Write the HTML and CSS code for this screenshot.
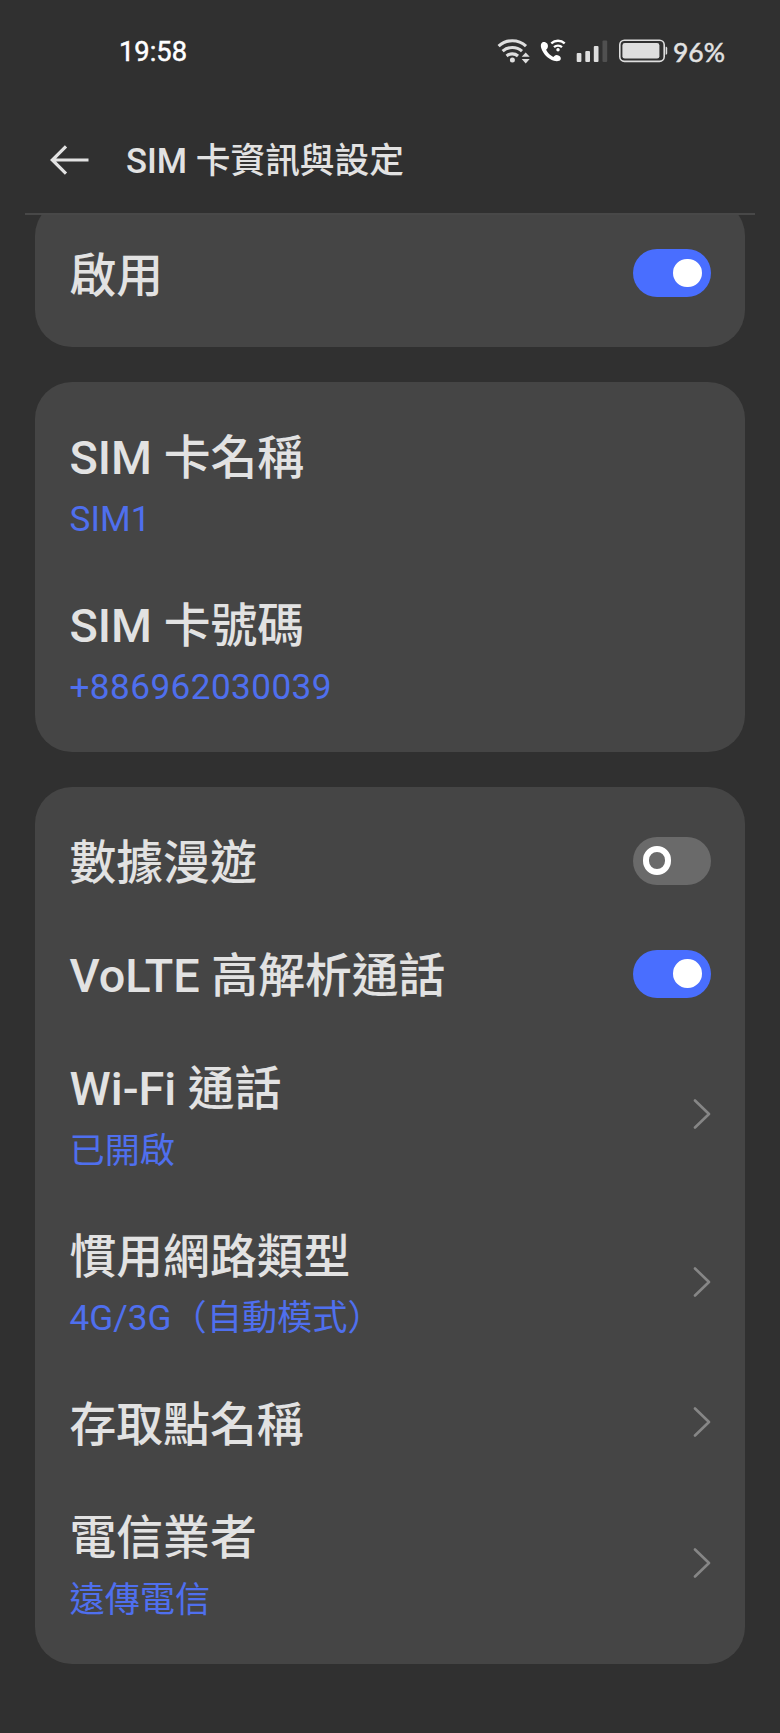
FILE: index.html
```html
<!DOCTYPE html>
<html lang="zh-Hant">
<head>
<meta charset="utf-8">
<title>SIM 卡資訊與設定</title>
<link rel="stylesheet" href="styles.css">
</head>
<body>
<div class="screen">
  <div class="status">
    <span class="time">19:58</span>
    <div class="status-right">
      <svg class="icons" width="192" height="30" viewBox="495 35 192 30" fill="none">
        <g stroke="#dedede" stroke-width="3.1">
          <path d="M498.600 46.200a20 20 0 0 1 27.400 0"/>
          <path d="M502.600 51.200a14.600 14.600 0 0 1 19.400 0"/>
          <path d="M506.600 56a8.800 8.800 0 0 1 11.400 0"/>
        </g>
        <circle cx="512.400" cy="60" r="2.500" fill="#dedede"/>
        <path d="M525.700 52.400l4 4.400h-8zM525.700 63.400l-4-4.400h8z" fill="#dedede"/>
        <path d="M542.500 42.300c-1.600.8-2.100 3.200-1.300 5.800 2 6.200 6.700 11 12.700 12.700 2.600.7 5.600.6 6.600-1 .8-1.400.1-3.200-1.500-4-1.600-.9-3.400-1-4.300-.1l-1.400 1.300c-3.200-1.600-5.600-4-7.200-7.200l1.200-1.300c.9-1.300.9-3.200-.1-4.900-1.100-1.500-3.200-2.100-4.700-1.300z" fill="#fff"/>
        <g stroke="#fff" stroke-width="2.400">
          <path d="M551.300 43.400a10 10 0 0 1 13.400 0"/>
          <path d="M554 47.200a6.200 6.200 0 0 1 8 0"/>
        </g>
        <circle cx="558" cy="49.800" r="1.700" fill="#fff"/>
        <rect x="576.700" y="53" width="4.700" height="9" rx="1" fill="#dedede"/>
        <rect x="585.300" y="51" width="4.700" height="11" rx="1" fill="#dedede"/>
        <rect x="593.800" y="46" width="4.700" height="16" rx="1" fill="#dedede"/>
        <rect x="602.500" y="40.500" width="4.700" height="21.500" rx="1" fill="#505050"/>
        <rect x="619.800" y="40.200" width="44.400" height="21.200" rx="4.600" stroke="#dedede" stroke-width="1.600"/>
        <rect x="622.400" y="43" width="37" height="15.600" rx="2.400" fill="#dedede"/>
        <path d="M665.600 46.700c1.300 0 1.600.5 1.600 1.600v4.800c0 1.100-.3 1.600-1.600 1.600z" fill="#dedede"/>
      </svg>
      <span class="percent">96%</span>
    </div>
  </div>

  <header class="header">
    <svg class="back" width="40" height="30" viewBox="0 0 40 30" fill="none" stroke="#e2e2e2" stroke-width="3.200"><path d="M39.500 15H3.500M17 1.400L3.300 15 17 28.600"/></svg>
    <h1 class="heading">SIM 卡資訊與設定</h1>
  </header>

  <main class="content">
    <section class="card card-first">
      <div class="row"><div class="text"><div class="title">啟用</div></div><span class="toggle on"><i class="knob"></i></span></div>
    </section>

    <section class="card">
      <div class="row tall"><div class="text"><div class="title">SIM 卡名稱</div><div class="sub">SIM1</div></div></div>
      <div class="row tall"><div class="text"><div class="title">SIM 卡號碼</div><div class="sub phone">+886962030039</div></div></div>
    </section>

    <section class="card">
      <div class="row"><div class="text"><div class="title">數據漫遊</div></div><span class="toggle"><i class="knob"></i></span></div>
      <div class="row"><div class="text"><div class="title">VoLTE 高解析通話</div></div><span class="toggle on"><i class="knob"></i></span></div>
      <div class="row tall"><div class="text"><div class="title">Wi-Fi 通話</div><div class="sub cjk">已開啟</div></div><svg class="chevron" viewBox="0 0 18 30"><path d="M2 1.500L16 15 2 28.500"/></svg></div>
      <div class="row tall"><div class="text"><div class="title">慣用網路類型</div><div class="sub">4G/3G（自動模式）</div></div><svg class="chevron" viewBox="0 0 18 30"><path d="M2 1.500L16 15 2 28.500"/></svg></div>
      <div class="row"><div class="text"><div class="title">存取點名稱</div></div><svg class="chevron" viewBox="0 0 18 30"><path d="M2 1.500L16 15 2 28.500"/></svg></div>
      <div class="row tall"><div class="text"><div class="title">電信業者</div><div class="sub cjk">遠傳電信</div></div><svg class="chevron" viewBox="0 0 18 30"><path d="M2 1.500L16 15 2 28.500"/></svg></div>
    </section>
  </main>
</div>
</body>
</html>
```
FILE: styles.css
```css
* { box-sizing: border-box; }
body {
  margin: 0;
  background: #303030;
  color: #e2e2e2;
  font-family: Roboto, "Noto Sans CJK TC", sans-serif;
}
.screen { width: 780px; height: 1733px; overflow: hidden; display: flex; flex-direction: column; }

.status {
  height: 104px;
  padding: 0 55px 0 119px;
  display: flex;
  justify-content: space-between;
  align-items: center;
}
.time { font-size: 27.300px; font-weight: 400; line-height: 30px; color: #fff; -webkit-text-stroke: 0.5px #fff; }
.status-right { display: flex; align-items: center; }
.icons { display: block; margin-top: -4px; }
.percent { width: 52px; margin-left: -14px; font: 26.500px/30px Lato, sans-serif; white-space: nowrap; -webkit-text-stroke: 0.5px #e2e2e2; }

.header {
  height: 111px;
  margin: 0 25px;
  padding: 0 25px 0 24px;
  border-bottom: 2px solid #484848;
  display: flex;
  align-items: center;
  gap: 37px;
}
.back { margin-top: 2px; flex: none; }
.heading { margin: 0; padding-top: 4px; font-size: 34.700px; font-weight: 500; line-height: 44px; white-space: nowrap; }

.content { height: 1518px; overflow: hidden; padding: 0 35px; }
.card {
  background: #454545;
  border-radius: 37px;
  padding: 17.500px 34px 17px 34.500px;
  margin-bottom: 34.800px;
}
.card-first { margin-top: -16px; padding-bottom: 17.500px; }
.row { height: 113px; display: flex; align-items: center; justify-content: space-between; }
.tall { height: 167.800px; }
.text { align-self: flex-start; padding-top: 32.200px; }
.title { font-size: 46.800px; line-height: 55px; font-weight: 500; white-space: nowrap; }
.sub { margin-top: 13px; font-size: 35.200px; line-height: 41px; color: #4f6fee; white-space: nowrap; }
.cjk { margin-top: 14px; }
.phone { letter-spacing: 0.4px; }

.toggle {
  width: 78px;
  height: 48px;
  padding: 0 9.500px;
  border-radius: 24px;
  background: #6a6a6a;
  display: flex;
  align-items: center;
}
.toggle.on { background: #496eff; justify-content: flex-end; }
.knob { width: 28.500px; height: 28.500px; border-radius: 50%; border: 6px solid #fff; }
.on .knob { background: #fff; }
.chevron { width: 18px; height: 30px; fill: none; stroke: #868686; stroke-width: 2.600; stroke-linecap: round; stroke-linejoin: round; }
```
